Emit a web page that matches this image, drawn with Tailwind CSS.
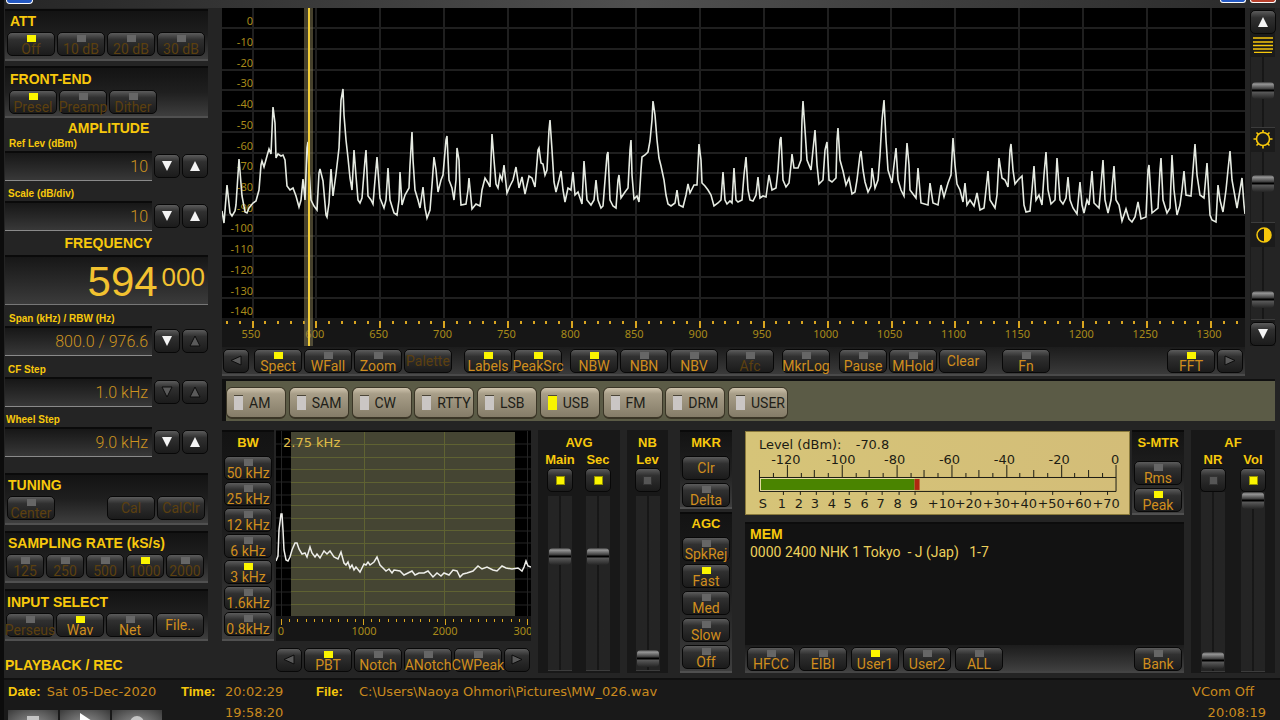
<!DOCTYPE html>
<html lang="en">
<head>
  <meta charset="UTF-8" />
  <meta name="viewport" content="width=device-width, initial-scale=1.0"/>
  <title>Receiver Console</title>
  <script src="https://cdn.jsdelivr.net/npm/@tailwindcss/browser@4"></script>
</head>
<body class="flex h-screen flex-col overflow-hidden border-l-4 border-[#0c0c0c] bg-[#242424] font-[Roboto,sans-serif] text-[#c98a1e]">

  <!-- Window edge -->
  <header class="flex h-2 shrink-0 items-start bg-linear-to-r from-[#262626] via-[#505050] to-[#2a2a2a]">
    <span class="ml-0.5 h-1 w-[27px] rounded-b-sm border-x border-b border-white bg-[#2459c4]"></span>
    <span class="ml-auto h-[3px] w-[26px] rounded-b-sm border-x border-b border-white bg-[#2459c4]"></span>
    <span class="mr-1 ml-1 h-[3px] w-[26px] rounded-b-sm border-x border-b border-white bg-[#b8402c]"></span>
  </header>

  <main class="flex h-[670px] shrink-0">

    <!-- Left column -->
    <aside class="w-[218px] shrink-0 pr-[14px] pl-px pt-px font-['Liberation_Sans',sans-serif]">
      <section data-panel class="h-[52px] pl-0.5">
        <h2 class="pl-[3px] text-sm leading-[21px] font-bold text-[#f7c80c]">ATT</h2>
        <div class="flex gap-0.5">
          <button class="w-12" data-led="on" disabled>Off</button>
          <button class="w-12" data-led="off" disabled>10 dB</button>
          <button class="w-12" data-led="off" disabled>20 dB</button>
          <button class="w-12" data-led="off" disabled>30 dB</button>
        </div>
      </section>

      <section data-panel class="mt-[5px] h-[52px] pl-1">
        <h2 class="pl-px text-sm leading-[22px] font-bold text-[#f7c80c]">FRONT-END</h2>
        <div class="flex gap-0.5">
          <button class="w-12" data-led="on" disabled>Presel</button>
          <button class="w-12" data-led="off" disabled>Preamp</button>
          <button class="w-12" data-led="off" disabled>Dither</button>
        </div>
      </section>

      <h2 class="pt-px pl-1 text-center text-sm leading-[18px] font-bold text-[#f7c80c]">AMPLITUDE</h2>
      <label for="ref" class="block pl-1 text-[10px] leading-[14px] font-bold text-[#f7c80c]">Ref Lev (dBm)</label>
      <div class="flex items-center gap-0.5">
        <input id="ref" data-field value="10" readonly />
        <button data-arrow="down" aria-label="Reference level down"></button>
        <button data-arrow="up" aria-label="Reference level up"></button>
      </div>
      <label for="scale" class="mt-1.5 block pl-[3px] text-[10px] leading-[14px] font-bold text-[#f7c80c]">Scale (dB/div)</label>
      <div class="flex items-center gap-0.5">
        <input id="scale" data-field value="10" readonly />
        <button data-arrow="down" aria-label="Scale down"></button>
        <button data-arrow="up" aria-label="Scale up"></button>
      </div>

      <h2 class="mt-[3px] pl-1 text-center text-sm leading-[18px] font-bold text-[#f7c80c]">FREQUENCY</h2>
      <output class="mt-[3px] flex h-[50px] justify-end border-t-2 border-b border-t-[#0a0a0a] border-b-[#777] bg-linear-to-b from-[#171717] to-[#3b3b3b] pr-[3px] text-[#f2c230]">
        <span class="text-[42px] leading-[50px]">594</span>
        <span class="pl-1 text-[26px] leading-[40px]">000</span>
      </output>

      <label for="span" class="mt-[7px] block pl-1 text-[10px] leading-[14px] font-bold text-[#f7c80c]">Span (kHz) / RBW (Hz)</label>
      <div class="flex items-center gap-0.5">
        <input id="span" data-field value="800.0 / 976.6" readonly />
        <button data-arrow="down" aria-label="Span down"></button>
        <button data-arrow="up" aria-label="Span up" disabled></button>
      </div>
      <label for="cfstep" class="mt-[7px] block pl-[3px] text-[10px] leading-[14px] font-bold text-[#f7c80c]">CF Step</label>
      <div class="flex items-center gap-0.5">
        <input id="cfstep" data-field value="1.0 kHz" readonly />
        <button data-arrow="down" aria-label="CF step down" disabled></button>
        <button data-arrow="up" aria-label="CF step up" disabled></button>
      </div>
      <label for="wheel" class="mt-1.5 block pl-px text-[10px] leading-[14px] font-bold text-[#f7c80c]">Wheel Step</label>
      <div class="flex items-center gap-0.5">
        <input id="wheel" data-field value="9.0 kHz" readonly />
        <button data-arrow="down" aria-label="Wheel step down"></button>
        <button data-arrow="up" aria-label="Wheel step up"></button>
      </div>

      <section data-panel class="mt-4 h-[52px] pl-0.5">
        <h2 class="pl-px text-sm leading-[21px] font-bold text-[#f7c80c]">TUNING</h2>
        <div class="flex gap-0.5">
          <button class="mr-auto w-12" data-led="off" disabled>Center</button>
          <button class="w-12" data-led="none" disabled>Cal</button>
          <button class="mr-[3px] w-12" data-led="none" disabled>CalClr</button>
        </div>
      </section>
      <section data-panel class="mt-1.5 h-[52px] pl-px">
        <h2 class="pl-0.5 text-sm leading-[21px] font-bold text-[#f7c80c]">SAMPLING RATE (kS/s)</h2>
        <div class="flex gap-0.5">
          <button class="w-[38px]" data-led="off" disabled>125</button>
          <button class="w-[38px]" data-led="off" disabled>250</button>
          <button class="w-[38px]" data-led="off" disabled>500</button>
          <button class="w-[38px]" data-led="on" disabled>1000</button>
          <button class="w-[38px]" data-led="off" disabled>2000</button>
        </div>
      </section>
      <section data-panel class="mt-1.5 h-[52px] pl-px">
        <h2 class="pl-px text-sm leading-[22px] font-bold text-[#f7c80c]">INPUT SELECT</h2>
        <div class="flex gap-0.5">
          <button class="w-12" data-led="off" disabled>Perseus</button>
          <button class="w-12" data-led="on">Wav</button>
          <button class="w-12" data-led="off">Net</button>
          <button class="w-12" data-led="none">File..</button>
        </div>
      </section>
      <h2 class="mt-3.5 text-sm leading-5 font-bold text-[#f7c80c]">PLAYBACK / REC</h2>
    </aside>

    <div class="flex min-w-0 flex-1 flex-col pr-[5px]">

      <!-- Main spectrum -->
      <div class="flex gap-[5px]">
        <div class="relative min-w-0 flex-1">
          <svg class="block h-[310px] w-full bg-black" viewBox="222 8 1023 310" preserveAspectRatio="none" fill="none">
            <path id="grid" stroke="#1f1f1f" vector-effect="non-scaling-stroke" stroke-width="2"/>
          </svg>
          <div class="absolute top-0 left-0 flex h-[314px] w-[31px] flex-col pt-[3px] text-right font-['Noto_Sans',sans-serif] text-[11px] text-[#a88a1a]" id="dbAxis"></div>
          <div class="absolute top-0 left-[8%] h-[338px] w-[9px] bg-[#8a8058]/50"></div>
          <svg class="absolute top-0 left-0 h-[310px] w-full" viewBox="222 8 1023 310" preserveAspectRatio="none" fill="none">
            <polyline stroke="#e6ebe2" stroke-width="1.600" vector-effect="non-scaling-stroke" points="222,211 224,223 227,185 230,213 232,216 235,211 236,205 239,159 242,196 245,212 247,213 249,208 253,203 256,201 259,190 261,165 262,161 264,167 267,156 269,149 271,154 273,107 275,123 276,158 278,154 281,156 283,155 285,160 287,186 290,190 293,188 296,196 299,207 301,200 303,179 305,200 307,148 308,142 309,170 311,200 314,206 317,210 319,173 320,169 323,181 326,215 327,217 329,203 331,169 333,196 336,174 339,148 341,100 343,89 344,115 346,140 348,158 350,178 352,190 354,150 356,176 358,200 360,203 362,198 365,160 366,150 368,196 371,200 373,204 375,180 377,157 380,198 384,208 386,200 388,168 390,200 394,213 397,215 399,200 400,172 402,205 405,195 409,188 410,165 412,132 413,160 415,190 418,200 420,208 423,187 425,208 427,218 430,210 432,185 434,157 436,170 438,192 441,180 443,175 446,140 447,136 449,180 452,188 454,200 456,180 457,148 459,160 460,190 461,205 466,204 468,190 469,178 472,209 476,204 480,206 482,190 485,178 488,183 490,187 492,134 494,160 496,184 498,188 500,175 502,180 504,165 507,193 510,186 513,180 516,167 519,188 522,177 525,194 529,176 532,178 535,187 538,150 539,148 541,163 543,164 545,175 547,170 549,130 550,120 552,150 554,182 556,192 559,180 561,171 563,190 565,202 568,188 571,190 573,172 575,195 578,192 582,204 584,161 587,200 591,205 594,200 596,180 598,200 601,208 603,206 607,155 608,152 610,200 613,206 616,208 618,180 619,175 621,198 625,192 628,188 630,150 631,140 632,175 634,199 637,196 639,202 641,170 642,157 645,155 648,152 650,141 652,120 653,101 655,115 657,140 659,158 661,166 664,180 666,195 668,204 671,206 675,203 677,190 679,205 683,207 686,195 688,184 690,193 694,185 697,185 699,144 701,160 702,183 705,186 708,190 711,195 714,206 718,203 721,200 723,172 725,200 727,204 730,201 732,203 734,168 736,200 738,202 742,200 744,175 746,157 748,190 750,200 753,201 756,195 758,177 760,198 763,196 766,197 769,175 772,190 776,188 778,170 780,140 781,137 783,180 786,187 789,183 791,165 792,154 794,168 798,168 801,160 802,120 803,101 805,130 807,160 811,170 813,150 815,130 817,165 819,184 823,180 825,150 827,142 829,180 832,182 836,178 837,140 838,128 840,160 843,171 846,185 849,178 852,194 855,192 857,180 860,155 861,151 863,170 865,182 868,192 871,186 872,168 875,188 878,180 880,155 882,120 884,100 886,140 888,170 892,183 894,165 896,148 898,180 901,190 904,196 906,160 907,143 909,165 910,190 913,194 916,198 918,168 921,203 928,205 930,183 933,203 938,205 941,185 944,197 948,183 951,175 953,138 955,165 957,184 960,190 963,202 965,183 967,205 970,200 974,206 977,193 980,210 984,208 986,190 988,171 990,200 995,208 997,195 999,158 1002,178 1005,180 1008,187 1010,150 1011,144 1013,170 1015,184 1018,180 1022,176 1024,205 1026,212 1030,211 1032,190 1034,166 1036,200 1039,195 1042,205 1044,175 1046,152 1048,190 1051,204 1055,200 1057,158 1060,200 1063,204 1066,198 1068,177 1070,200 1073,208 1077,214 1080,182 1082,205 1084,213 1087,200 1089,205 1092,171 1094,203 1099,208 1101,185 1103,160 1105,200 1108,213 1111,200 1114,166 1116,200 1119,205 1122,221 1126,209 1129,219 1132,222 1135,217 1138,202 1141,219 1146,217 1148,170 1149,165 1152,213 1158,208 1160,170 1161,158 1163,200 1167,213 1170,208 1172,155 1174,190 1177,215 1180,205 1182,190 1184,171 1186,195 1191,196 1193,170 1195,144 1197,175 1200,195 1204,198 1207,163 1210,215 1212,220 1216,222 1218,185 1220,200 1223,212 1226,190 1228,170 1230,151 1232,180 1237,208 1240,190 1242,178 1244,205 1245,214"/>
          </svg>
          <svg class="block h-[10px] w-full bg-[#161616]" viewBox="222 318 1023 10" preserveAspectRatio="none" fill="none">
            <path id="freqTicks" stroke="#d9a520" stroke-width="2" vector-effect="non-scaling-stroke"/>
          </svg>
          <div class="h-[19px] bg-[#161616]">
            <div id="freqAxis" class="mr-1 -ml-[3px] flex text-center font-['Noto_Sans',sans-serif] text-[11px] leading-[12px] text-[#a88a1a]"></div>
          </div>
          <div class="absolute top-0 left-[8%] ml-1 h-[338px] w-0.5 bg-[#f0cc38]"></div>

          <!-- Display keys -->
          <div class="flex h-[29px] gap-0.5 border-b-2 border-[#4a4a4a] bg-linear-to-b from-[#1c1c1c] to-[#3a3a3a] pt-0.5 pl-px">
            <button class="mr-[3px]" data-arrow="left" aria-label="Previous keys" disabled></button>
            <button class="w-12" data-led="on">Spect</button>
            <button class="w-12" data-led="off">WFall</button>
            <button class="w-12" data-led="off">Zoom</button>
            <button class="mr-2.5 w-12" data-led="none" disabled>Palette</button>
            <button class="w-12" data-led="on">Labels</button>
            <button class="mr-1.5 w-12" data-led="on">PeakSrc</button>
            <button class="w-12" data-led="on">NBW</button>
            <button class="w-12" data-led="off">NBN</button>
            <button class="mr-1.5 w-12" data-led="off">NBV</button>
            <button class="mr-1.5 w-12" data-led="off" disabled>Afc</button>
            <button class="mr-[7px] w-12" data-led="off">MkrLog</button>
            <button class="w-12" data-led="off">Pause</button>
            <button class="w-12" data-led="off">MHold</button>
            <button class="mr-[13px] w-12" data-led="none">Clear</button>
            <button class="mr-auto w-12" data-led="off">Fn</button>
            <button class="w-12" data-led="on">FFT</button>
            <button class="mr-0.5" data-arrow="right" aria-label="Next keys" disabled></button>
          </div>
        </div>

        <!-- Level, brightness, contrast -->
        <div class="flex w-[25px] flex-col items-center self-start bg-[#1b1b1b] pt-0.5 text-[#f7c80c]">
          <button data-arrow="up" aria-label="Scroll up"></button>
          <svg class="mt-[3px] mb-1 h-4 w-5 shrink-0" viewBox="0 0 20 16" stroke="currentColor" stroke-width="1.500"><path d="M0 1h20M0 5h20M0 8.500h20M0 12h20M1 15.500h18"/></svg>
          <input type="range" class="h-[71px]" value="52" aria-label="Offset" />
          <svg class="my-0.5 h-5 w-5 shrink-0" viewBox="0 0 20 20" fill="none" stroke="currentColor" stroke-width="1.600"><circle cx="10" cy="9" r="6.500"/><path d="M10 0v3M10 15.500v3M.500 9h3M16.500 9h3M3.500 2.500l2 2M14.500 13.500l2 2M3.500 15.500l2-2M14.500 4.500l2-2"/></svg>
          <input type="range" class="h-[71px]" value="56" aria-label="Brightness" />
          <svg class="my-0.5 h-5 w-5 shrink-0" viewBox="0 0 20 20"><circle cx="11" cy="10" r="7" fill="none" stroke="currentColor" stroke-width="1.500"/><path d="M11 3a7 7 0 0 1 0 14z" fill="currentColor"/></svg>
          <input type="range" class="h-[73px]" value="20" aria-label="Contrast" />
          <button class="mt-0.5" data-arrow="down" aria-label="Scroll down"></button>
        </div>
      </div>

      <!-- Demodulation modes -->
      <div class="mt-[3px] flex h-[42px] shrink-0 border-t-2 border-l-4 border-[#101010] bg-[#5b5b46] pt-1.5">
        <div id="modes" class="flex w-[562px] justify-between"></div>
      </div>

      <div class="mt-[9px] flex h-[243px]">

        <!-- Bandwidth -->
        <section data-panel class="flex h-[211px] w-[52px] flex-col items-center gap-0.5">
          <h2 class="font-['Liberation_Sans',sans-serif] text-[13px] leading-[22px] font-bold text-[#f7c80c]">BW</h2>
          <button class="w-12" data-led="off">50 kHz</button>
          <button class="w-12" data-led="off">25 kHz</button>
          <button class="w-12" data-led="off">12 kHz</button>
          <button class="w-12" data-led="off">6 kHz</button>
          <button class="w-12" data-led="on">3 kHz</button>
          <button class="w-12" data-led="off">1.6kHz</button>
          <button class="w-12" data-led="off">0.8kHz</button>
        </section>

        <!-- Filter scope -->
        <section class="relative ml-0.5 w-[255px] overflow-hidden border-t border-[#111]">
          <svg class="block h-[196px] w-full bg-[#161616]" viewBox="276 431 255 196" fill="none">
            <path d="M276 431h255v185H276z" fill="#000"/>
            <path d="M276 444h255M276 457h255M276 469h255M276 482h255M276 495h255M276 505h255M276 518h255M276 531h255M276 543h255M276 556h255M276 568h255M276 579h255M276 592h255M276 605h255M281.500 431v185M527.500 431v185" stroke="#242424"/>
            <path d="M291 432h224v184H291z" fill="#454533"/>
            <path d="M291 444.500h224M291 457.500h224M291 469.500h224M291 482.500h224M291 494.500h224M291 505.500h224M291 518.500h224M291 530.500h224M291 543.500h224M291 555.500h224M291 567.500h224M291 579.500h224M291 591.500h224M291 604.500h224M364.500 432v184M444.500 432v184" stroke="#5f6232"/>
            <path id="filterTicks" stroke="#d9a520" stroke-width="1"/>
            <polyline stroke="#eeeeea" stroke-width="1.500" points="276,561 278,556 279,530 281,514 282,514 283,530 284,550 286,560 288,561 290,557 292,550 295,543 297,543 299,549 302,554 305,553 307,557 310,547 312,553 315,557 317,554 320,558 324,551 327,554 330,551 334,557 338,559 341,552 344,563 346,565 348,562 350,568 352,565 354,570 356,567 360,572 364,564 366,565 368,562 370,565 374,562 377,557 380,565 383,568 386,571 389,569 392,573 394,570 400,571 404,575 408,573 412,571 415,575 419,573 424,573 428,571 433,577 437,573 441,576 444,573 449,575 453,570 457,571 460,577 463,574 467,573 473,571 478,566 482,569 487,567 493,570 497,571 502,566 506,568 512,569 518,568 522,571 524,567 526,561 528,566 531,567"/>
            <text x="283" y="447" font-family="DejaVu Sans, sans-serif" font-size="13" fill="#e0bc48">2.75 kHz</text>
          </svg>
          <div class="-mr-6 -ml-9 flex h-[14px] bg-[#161616] text-center font-['Noto_Sans',sans-serif] text-[11px] leading-[8px] text-[#a88a1a]">
            <span class="w-[82px] shrink-0">0</span>
            <span class="w-[84px] shrink-0">1000</span>
            <span class="w-[78px] shrink-0">2000</span>
            <span class="w-[84px] shrink-0">3000</span>
          </div>
          <div class="mt-[7px] flex gap-0.5">
            <button data-arrow="left" aria-label="Previous filter keys" disabled></button>
            <button class="w-12" data-led="on">PBT</button>
            <button class="w-12" data-led="off">Notch</button>
            <button class="w-12" data-led="off">ANotch</button>
            <button class="w-12" data-led="off">CWPeak</button>
            <button data-arrow="right" aria-label="Next filter keys" disabled></button>
          </div>
        </section>

        <!-- Averaging -->
        <section class="ml-[7px] w-[82px] bg-[#181818] pt-1 text-center font-['Liberation_Sans',sans-serif] text-[13px] leading-[18px] font-bold text-[#f7c80c]">
          <h2>AVG</h2>
          <div class="flex justify-center gap-3">
            <div class="flex w-[26px] flex-col items-center">
              <label for="avgMain" class="leading-4">Main</label>
              <button data-toggle="on" aria-label="Main averaging"></button>
              <input id="avgMain" type="range" class="mt-1 h-[175px]" value="67" />
            </div>
            <div class="flex w-[26px] flex-col items-center">
              <label for="avgSec" class="leading-4">Sec</label>
              <button data-toggle="on" aria-label="Secondary averaging"></button>
              <input id="avgSec" type="range" class="mt-1 h-[175px]" value="67" />
            </div>
          </div>
        </section>

        <!-- Noise blanker -->
        <section class="ml-[7px] flex w-[41px] flex-col items-center bg-[#181818] pt-1 font-['Liberation_Sans',sans-serif] text-[13px] leading-[18px] font-bold text-[#f7c80c]">
          <h2>NB</h2>
          <label for="nbLev" class="leading-4">Lev</label>
          <button data-toggle="off" aria-label="Noise blanker"></button>
          <input id="nbLev" type="range" class="mt-1 h-[175px]" value="2" />
        </section>

        <div class="ml-3 flex w-[52px] flex-col justify-between">
          <section data-panel class="flex h-[79px] flex-col items-center gap-[3px]">
            <h2 class="font-['Liberation_Sans',sans-serif] text-[13px] leading-[21px] font-bold text-[#f7c80c]">MKR</h2>
            <button class="w-12" data-led="none">Clr</button>
            <button class="w-12" data-led="off">Delta</button>
          </section>
          <section data-panel class="flex h-[161px] flex-col items-center gap-[3px]">
            <h2 class="font-['Liberation_Sans',sans-serif] text-[13px] leading-[20px] font-bold text-[#f7c80c]">AGC</h2>
            <button class="w-12" data-led="off">SpkRej</button>
            <button class="w-12" data-led="on">Fast</button>
            <button class="w-12" data-led="off">Med</button>
            <button class="w-12" data-led="off">Slow</button>
            <button class="w-12" data-led="off">Off</button>
          </section>
        </div>

        <div class="ml-[13px] flex min-w-0 flex-1 flex-col">
          <div class="flex h-[85px] gap-0.5">
            <!-- S-meter -->
            <div class="mt-px min-w-0 flex-1 border border-[#8a7a3c] bg-linear-to-r from-[#d6c478] to-[#d3bd78]">
              <svg class="block h-[82px] w-full" viewBox="746 432 384 82" font-family="DejaVu Sans, sans-serif" font-size="13" fill="#1c1c14">
                <text x="759" y="449">Level (dBm):</text>
                <text x="856" y="449">-70.8</text>
                <g text-anchor="middle">
                  <text x="786" y="464">-120</text><text x="841" y="464">-100</text><text x="895" y="464">-80</text><text x="950" y="464">-60</text><text x="1005" y="464">-40</text><text x="1060" y="464">-20</text><text x="1116" y="464">0</text>
                  <text x="763" y="508">S</text><text x="782" y="508">1</text><text x="799" y="508">2</text><text x="815" y="508">3</text><text x="832" y="508">4</text><text x="848" y="508">5</text><text x="865" y="508">6</text><text x="881" y="508">7</text><text x="898" y="508">8</text><text x="914" y="508">9</text>
                  <text x="942" y="508">+10</text><text x="969" y="508">+20</text><text x="997" y="508">+30</text><text x="1024" y="508">+40</text><text x="1052" y="508">+50</text><text x="1079" y="508">+60</text><text x="1107" y="508">+70</text>
                </g>
                <path id="meterTicks" stroke="#1c1c14" fill="none" />
                <path d="M760 478h155v13H760z" fill="#e8dca4"/>
                <path d="M761 479h154v11H761z" fill="#4a8400"/>
                <path d="M915 479h5v11h-5z" fill="#b02810"/>
                <path d="M759.500 470v21.500h357.500V465M759.500 477.500H1117" stroke="#1c1c14" fill="none"/>
              </svg>
            </div>
            <section data-panel class="flex w-[52px] flex-col items-center gap-[3px]">
              <h2 class="pb-1 font-['Liberation_Sans',sans-serif] text-[13px] leading-[22px] font-bold text-[#f7c80c]">S-MTR</h2>
              <button class="w-12" data-led="off">Rms</button>
              <button class="w-12" data-led="on">Peak</button>
            </section>
          </div>
          <!-- Memory -->
          <section class="mt-[7px] flex flex-1 flex-col border-t-2 border-[#0c0c0c] bg-[#121212]">
            <h2 class="pt-px pl-[5px] font-['Liberation_Sans',sans-serif] text-sm leading-[18px] font-bold text-[#f7c80c]">MEM</h2>
            <p class="pl-[5px] text-sm leading-[18px] whitespace-pre text-[#ecd05c]">0000 2400 NHK 1 Tokyo  - J (Jap)   1-7</p>
            <div class="mt-auto flex h-7 gap-1 border-b-2 border-[#444] bg-linear-to-b from-[#1c1c1c] to-[#404040] pt-0.5 pl-0.5">
              <button class="w-12" data-led="off">HFCC</button>
              <button class="w-12" data-led="off">EIBI</button>
              <button class="w-12" data-led="on">User1</button>
              <button class="w-12" data-led="off">User2</button>
              <button class="mr-auto w-12" data-led="off">ALL</button>
              <button class="mr-0.5 w-12" data-led="off">Bank</button>
            </div>
          </section>
        </div>

        <!-- Audio -->
        <section class="ml-[7px] w-[84px] bg-[#181818] pt-1 text-center font-['Liberation_Sans',sans-serif] text-[13px] leading-[18px] font-bold text-[#f7c80c]">
          <h2>AF</h2>
          <div class="flex justify-center gap-3.5">
            <div class="flex w-[26px] flex-col items-center">
              <label for="nr" class="leading-4">NR</label>
              <button data-toggle="off" aria-label="Noise reduction"></button>
              <input id="nr" type="range" class="h-[180px]" value="1" />
            </div>
            <div class="flex w-[26px] flex-col items-center">
              <label for="vol" class="leading-4">Vol</label>
              <button data-toggle="on" aria-label="Volume on"></button>
              <input id="vol" type="range" class="h-[180px]" value="100" />
            </div>
          </div>
        </section>
      </div>
    </div>
  </main>

  <!-- Playback status -->
  <footer class="grid shrink-0 grid-cols-[177px_44px_91px_43px_1fr_auto] border-t-2 border-[#101010] bg-[#191919] pr-3.5 font-['DejaVu_Sans',sans-serif] text-[13px]">
    <p class="pl-1 leading-6"><b class="mr-0.5 font-['Liberation_Sans',sans-serif] text-[#f7c80c]">Date:</b> Sat 05-Dec-2020</p>
    <b class="font-['Liberation_Sans',sans-serif] leading-6 text-[#f7c80c]">Time:</b>
    <span class="leading-6">20:02:29</span>
    <b class="font-['Liberation_Sans',sans-serif] leading-6 text-[#f7c80c]">File:</b>
    <span class="leading-6">C:\Users\Naoya Ohmori\Pictures\MW_026.wav</span>
    <span class="pr-3 leading-6">VCom Off</span>
    <div class="col-span-2 flex gap-0.5 pt-1.5 pl-1">
      <button class="h-6 w-[50px] bg-radial-[at_50%_70%] from-[#999] to-[#3a3a3a]" aria-label="Stop"><svg class="mx-auto size-5" viewBox="0 0 20 20"><path d="M4 4h12v12H4z" fill="#c4c4c4"/></svg></button>
      <button class="h-6 w-[50px] bg-radial-[at_50%_70%] from-[#999] to-[#3a3a3a]" aria-label="Play"><svg class="mx-auto size-5" viewBox="0 0 20 20"><path d="M5 1l12 8-12 8z" fill="#fff"/></svg></button>
      <button class="h-6 w-[50px] bg-radial-[at_50%_70%] from-[#999] to-[#3a3a3a]" aria-label="Record"><svg class="mx-auto size-5" viewBox="0 0 20 20"><circle cx="10" cy="11" r="7" fill="#c4c4c4"/></svg></button>
    </div>
    <span class="leading-[18px]">19:58:20</span>
    <span class="col-span-3 text-right leading-[18px]">20:08:19</span>
  </footer>

  <script>
    const addClasses = (el, list) => el.classList.add(...list.split(' '));
    const keyLook = 'shrink-0 rounded-[5px] border border-[#080808] bg-linear-to-b from-[#5c5c5c] via-[#303030] via-30% to-[#1b1b1b]';

    document.querySelectorAll('[data-panel]').forEach(el => {
      addClasses(el, 'border-t-2 border-b-2 border-t-[#0a0a0a] border-b-[#505050] bg-linear-to-b from-[#131313] via-[#1f1f1f] to-[#3e3e3e]');
    });

    // keys with an indicator lamp over the caption
    document.querySelectorAll('[data-led]').forEach(el => {
      addClasses(el, keyLook + " flex h-6 flex-col items-center font-[Roboto,sans-serif] text-sm leading-[14px] font-normal whitespace-nowrap text-[#d08e1e] disabled:text-[#5c4010]");
      const led = el.dataset.led;
      if (led === 'none') {
        el.classList.add('justify-center');
      } else {
        const lamp = document.createElement('span');
        addClasses(lamp, 'mt-0.5 h-[7px] w-[9px] shrink-0');
        lamp.classList.add(led === 'on' ? 'bg-[#fbf500]' : 'bg-[#666]');
        el.prepend(lamp);
      }
    });

    document.querySelectorAll('[data-toggle]').forEach(el => {
      addClasses(el, keyLook + ' flex h-6 w-[26px] items-center justify-center');
      const color = el.dataset.toggle === 'on' ? 'bg-[#fbf500]' : 'bg-[#565656]';
      el.innerHTML = `<span class="size-[9px] border border-black/40 ${color}"></span>`;
    });

    const arrows = {
      up: 'M6 1l5 10H1z',
      down: 'M1 1h10L6 11z',
      left: 'M11 1v9L1 5.5z',
      right: 'M1 1v9l10-4.5z'
    };
    document.querySelectorAll('[data-arrow]').forEach(el => {
      addClasses(el, keyLook + ' flex h-6 w-[26px] items-center justify-center');
      const paint = el.disabled ? 'fill="#5a5a5a" stroke="#0c0c0c"' : 'fill="#f4f4f4"';
      el.innerHTML = `<svg class="size-3" viewBox="0 0 12 12"><path d="${arrows[el.dataset.arrow]}" ${paint}/></svg>`;
    });

    document.querySelectorAll('[data-field]').forEach(el => {
      addClasses(el, 'h-[30px] w-0 min-w-0 flex-1 border-t-2 border-b border-t-[#0a0a0a] border-b-[#8a8a8a] bg-linear-to-b from-[#171717] to-[#383838] pr-1 text-right font-[Roboto,sans-serif] text-base font-light text-[#cd9420] outline-none');
    });

    document.querySelectorAll('input[type=range]').forEach(el => {
      addClasses(el, 'w-6 shrink-0 appearance-none border-b border-[#3c3c3c] bg-linear-to-r from-[#242424] from-45% via-[#0e0e0e] via-50% to-[#242424] to-55% [direction:rtl] [writing-mode:vertical-lr] [&::-webkit-slider-thumb]:h-[17px] [&::-webkit-slider-thumb]:w-[22px] [&::-webkit-slider-thumb]:appearance-none [&::-webkit-slider-thumb]:rounded-[4px] [&::-webkit-slider-thumb]:bg-[linear-gradient(#333,#999_2px,#3a3a3a_7px,#000_8px,#000_9px,#5a5a5a_10px,#242424)]');
    });

    document.getElementById('modes').innerHTML = ['AM', 'SAM', 'CW', 'RTTY', 'LSB', 'USB', 'FM', 'DRM', 'USER'].map(name => `
      <button class="flex h-8 w-[60px] items-center gap-1.5 rounded-[6px] border border-b-2 border-[#3a3526] bg-linear-to-b from-[#cfc4ae] via-[#a89e88] via-20% to-[#857c68] pl-[7px] text-sm text-[#211e18]">
        <span class="h-[15px] w-[9px] shrink-0 border-t border-[#4c4638] ${name === 'USB' ? 'bg-[#f8f400]' : 'bg-[#cac6c4]'}"></span>${name}
      </button>`).join('');

    // axis captions
    document.getElementById('dbAxis').innerHTML = Array.from({ length: 15 }, (_, i) =>
      `<span class="flex flex-1 items-center justify-end">${-10 * i}</span>`).join('');
    document.getElementById('freqAxis').innerHTML = Array.from({ length: 16 }, (_, i) =>
      `<span class="flex-1">${550 + 50 * i}</span>`).join('');

    // graticules
    let grid = '';
    for (let x = 252.5; x < 1245; x += 63.9) grid += `M${Math.round(x)} 8v310`;
    for (let i = 0; i < 15; i++) grid += `M222 ${Math.round(28 + i * 20.75)}h1023`;
    document.getElementById('grid').setAttribute('d', grid);

    let ticks = '';
    for (let i = -2; i < 78; i++) {
      const x = Math.round(252.5 + i * 12.78);
      if (x < 1245) ticks += `M${x} 321v${i % 5 === 0 ? 7 : 3}`;
    }
    document.getElementById('freqTicks').setAttribute('d', ticks);

    ticks = '';
    for (let i = 0; i < 32; i++) {
      ticks += `M${Math.round(281 + i * 8.2) + 0.5} 619v${i % 10 === 0 ? 6 : 3}`;
    }
    document.getElementById('filterTicks').setAttribute('d', ticks);

    ticks = '';
    for (let i = 0; i < 25; i++) {
      const len = i % 4 === 1 ? 12 : i % 2 ? 7 : 4;
      ticks += `M${Math.round(773.3 + i * 13.73) + 0.5} 477v${-len}`;
    }
    for (let i = 0; i < 9; i++) ticks += `M${Math.round(783 + i * 16.5) + 0.5} 491v4`;
    for (let i = 0; i < 7; i++) ticks += `M${Math.round(943 + i * 27.5) + 0.5} 491v4`;
    document.getElementById('meterTicks').setAttribute('d', ticks);

    document.querySelectorAll('[data-toggle]').forEach(el => {
      el.addEventListener('click', () => {
        const lamp = el.firstElementChild;
        lamp.classList.toggle('bg-[#fbf500]');
        lamp.classList.toggle('bg-[#565656]');
      });
    });
  </script>
</body>
</html>
